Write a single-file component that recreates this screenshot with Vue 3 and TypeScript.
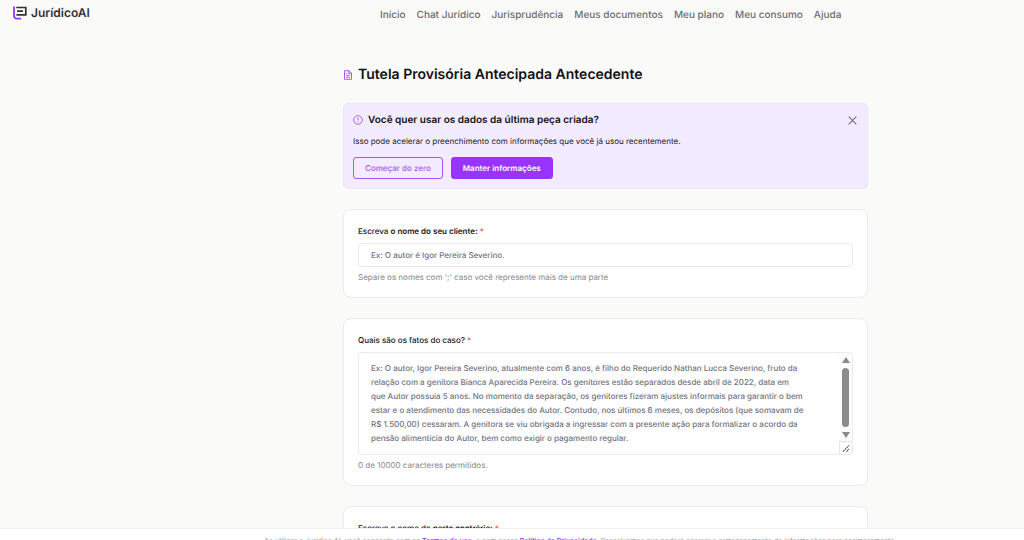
<script setup lang="ts">
import { ref } from 'vue'

const navItems: string[] = [
  'Início',
  'Chat Jurídico',
  'Jurisprudência',
  'Meus documentos',
  'Meu plano',
  'Meu consumo',
  'Ajuda',
]

const maxLength = 10000
const showNotice = ref(true)
const client = ref('')
const facts = ref('')
const opponent = ref('')

const factsPlaceholder = [
  'Ex: O autor, Igor Pereira Severino, atualmente com 6 anos, é filho do Requerido Nathan Lucca Severino, fruto da',
  'relação com a genitora Bianca Aparecida Pereira. Os genitores estão separados desde abril de 2022, data em',
  'que Autor possuía 5 anos. No momento da separação, os genitores fizeram ajustes informais para garantir o bem',
  'estar e o atendimento das necessidades do Autor. Contudo, nos últimos 6 meses, os depósitos (que somavam de',
  'R$ 1.500,00) cessaram. A genitora se viu obrigada a ingressar com a presente ação para formalizar o acordo da',
  'pensão alimentícia do Autor, bem como exigir o pagamento regular.',
].join('\n')
</script>

<template>
  <div class="page">
    <header class="topbar">
      <a class="brand" href="#">
        <svg class="brand-mark" viewBox="0 0 14 14" aria-hidden="true">
          <path d="M1 0.5V9.2Q1 12.7 4.4 12.7H8" fill="none" stroke="#9333ff" stroke-width="1.8" />
          <path d="M3.2 1.5H12.8V8.9H3.4M4 5.2H10" fill="none" stroke="#333336" stroke-width="1.7" />
        </svg>
        <span>JurídicoAI</span>
      </a>
      <nav class="nav">
        <a v-for="item in navItems" :key="item" href="#">{{ item }}</a>
      </nav>
    </header>

    <main class="content">
      <h1 class="title">
        <svg class="title-icon" viewBox="0 0 10 10" aria-hidden="true">
          <path
            d="M1.5 0.7H6L8.5 3.2V9.3H1.5ZM5.8 0.7V3.4H8.5M3.2 5.3H6.8M3.2 7.2H6.8M3.2 3.4H4.2"
            fill="none"
            stroke="currentColor"
            stroke-width="1"
            stroke-linejoin="round"
          />
        </svg>
        Tutela Provisória Antecipada Antecedente
      </h1>

      <section v-if="showNotice" class="notice">
        <div class="notice-head">
          <svg class="notice-icon" viewBox="0 0 10 10" aria-hidden="true">
            <circle cx="5" cy="5" r="4.3" fill="none" stroke="currentColor" stroke-width="0.9" />
            <path d="M5 2.6V5.4M5 6.6V7.5" stroke="currentColor" stroke-width="0.9" />
          </svg>
          <h2>Você quer usar os dados da última peça criada?</h2>
          <button class="close" type="button" aria-label="Fechar" @click="showNotice = false">
            <svg viewBox="0 0 8 8" aria-hidden="true">
              <path d="M0.6 0.6L7.4 7.4M7.4 0.6L0.6 7.4" stroke="currentColor" stroke-width="1.1" />
            </svg>
          </button>
        </div>
        <p>Isso pode acelerar o preenchimento com informações que você já usou recentemente.</p>
        <div class="actions">
          <button class="btn outline" type="button">Começar do zero</button>
          <button class="btn solid" type="button">Manter informações</button>
        </div>
      </section>

      <section class="card">
        <label for="client">Escreva <b>o nome do seu cliente:</b> <span class="req">*</span></label>
        <input id="client" v-model="client" class="field" type="text" placeholder="Ex: O autor é Igor Pereira Severino." />
        <p class="hint">Separe os nomes com ';' caso você represente mais de uma parte</p>
      </section>

      <section class="card">
        <label for="facts">Quais são os fatos do caso? <span class="req">*</span></label>
        <div class="area">
          <textarea id="facts" v-model="facts" rows="6" :maxlength="maxLength" :placeholder="factsPlaceholder"></textarea>
          <div class="scroll" aria-hidden="true">
            <span class="arrow up"></span>
            <span class="thumb"></span>
            <span class="arrow down"></span>
            <svg class="grip" viewBox="0 0 12 12">
              <path d="M3 9.5L9 3.5M6.5 9.5L9 7" stroke="#55555a" stroke-width="1.1" stroke-dasharray="2 0.5" />
            </svg>
          </div>
        </div>
        <p class="hint">{{ facts.length }} de {{ maxLength }} caracteres permitidos.</p>
      </section>

      <section class="card">
        <label for="opponent">Escreva o nome da <b>parte contrária:</b> <span class="req">*</span></label>
        <input id="opponent" v-model="opponent" class="field" type="text" />
      </section>
    </main>

    <footer class="legal">
      Ao utilizar o Jurídico AI, você concorda com os <a href="#">Termos de uso</a>, e com nossa
      <a href="#">Política de Privacidade</a>. Ressalvamos que poderá ocorrer o armazenamento de informações para aprimoramento.
    </footer>
  </div>
</template>

<style>
body {
  background: #fafaf8;
}
</style>

<style scoped>
.page {
  height: 100vh;
  overflow: hidden;
  font-family: Inter, "Liberation Sans", sans-serif;
  font-size: 8px;
  font-weight: 500;
  color: #18181b;
  text-rendering: geometricPrecision;
}
.page * {
  box-sizing: border-box;
}
.page h1,
.page h2,
.page p {
  margin: 0;
}
.page button,
.page input,
.page textarea {
  font: inherit;
  text-rendering: inherit;
}
.page a {
  text-decoration: none;
}
.topbar {
  display: grid;
  grid-template-columns: 380fr 644fr;
  align-items: center;
  height: 30px;
}
.brand {
  display: flex;
  align-items: center;
  gap: 4px;
  margin-left: 13px;
  padding-bottom: 5px;
  color: #333336;
  font-size: 12px;
  line-height: 16px;
  font-weight: 600;
}
.brand-mark {
  width: 14px;
  height: 14px;
}
.nav {
  display: flex;
  gap: 11px;
  font-size: 10px;
  line-height: 16px;
  white-space: nowrap;
}
.nav a {
  color: #6c6c70;
}
.content {
  width: 51.3%;
  margin-left: 33.5%;
  padding-top: 35px;
}
.title {
  display: flex;
  align-items: center;
  gap: 5px;
  color: #111113;
  font-size: 14px;
  line-height: 20px;
  font-weight: 600;
}
.title-icon {
  width: 10px;
  height: 10px;
  color: #a855f7;
}
.page .notice {
  margin-top: 18px;
  padding: 9px 10px 9px 9px;
  border: 1px solid #ebe6f5;
  border-radius: 5px;
  background: #f3ebff;
}
.notice-head {
  display: flex;
  align-items: center;
  gap: 5px;
}
.notice-head h2 {
  color: #111113;
  font-size: 10px;
  line-height: 14px;
  font-weight: 600;
}
.notice-icon {
  width: 10px;
  height: 10px;
  color: #a855f7;
}
.close {
  display: flex;
  margin-left: auto;
  padding: 0;
  border: 0;
  background: none;
  color: #767683;
}
.close svg {
  width: 9px;
  height: 9px;
}
.notice p {
  margin-top: 7px;
  line-height: 14px;
  font-weight: 400;
}
.actions {
  display: flex;
  gap: 8px;
  margin-top: 9px;
}
.page .btn {
  height: 22px;
  padding: 0 11px;
  border: 1px solid #a855f7;
  border-radius: 3px;
}
.outline {
  background: transparent;
  color: #a855f7;
}
.page .solid {
  background: #9933ff;
  border-color: #9933ff;
  color: #fff;
  font-weight: 600;
}
.card {
  margin-top: 20px;
  padding: 14px 14px 13px;
  border: 1px solid #ebebef;
  border-radius: 8px;
  background: #fff;
}
.card label {
  display: block;
  line-height: 14px;
}
.card b {
  font-weight: 600;
}
.req {
  color: #d9623b;
}
.field,
.area {
  width: 100%;
  margin-top: 5px;
  border: 1px solid #ebebee;
  border-radius: 4px;
  background: #fff;
}
.field {
  display: block;
  height: 24px;
  padding: 0 12px;
}
.area {
  display: flex;
}
.area textarea {
  flex: 1;
  min-width: 0;
  height: 101px;
  padding: 8px 12px;
  border: 0;
  border-radius: 4px;
  background: none;
  line-height: 14px;
  resize: none;
  overflow: hidden;
}
.field::placeholder,
.area textarea::placeholder {
  color: #70747e;
  opacity: 1;
}
.scroll {
  display: flex;
  flex-direction: column;
  align-items: center;
  width: 13px;
  padding-top: 4px;
  border-radius: 0 4px 4px 0;
  background: #fcfcfc;
}
.arrow {
  border: 4px solid transparent;
}
.up {
  border-top-width: 0;
  border-bottom: 6px solid #8b8b8b;
}
.down {
  border-bottom-width: 0;
  border-top: 6px solid #8b8b8b;
}
.thumb {
  flex: 1;
  width: 7px;
  margin: 5px 0;
  border-radius: 4px;
  background: #8b8b8b;
}
.grip {
  width: 13px;
  height: 13px;
  margin-top: 3px;
  border-top: 1px solid #e6e6e8;
  border-left: 1px solid #e6e6e8;
}
.card .hint {
  margin-top: 3px;
  color: #85878d;
  line-height: 14px;
  font-weight: 400;
}
.legal {
  position: fixed;
  inset: auto 0 -22px;
  height: 34px;
  padding: 6px 107px 0 264px;
  border-top: 1px solid #f0f0f1;
  background: #fff;
  color: #9a9ca3;
  font-size: 7px;
  line-height: 12px;
  font-weight: 400;
  white-space: nowrap;
}
.legal a {
  color: #9333ff;
  font-weight: 600;
}
</style>
